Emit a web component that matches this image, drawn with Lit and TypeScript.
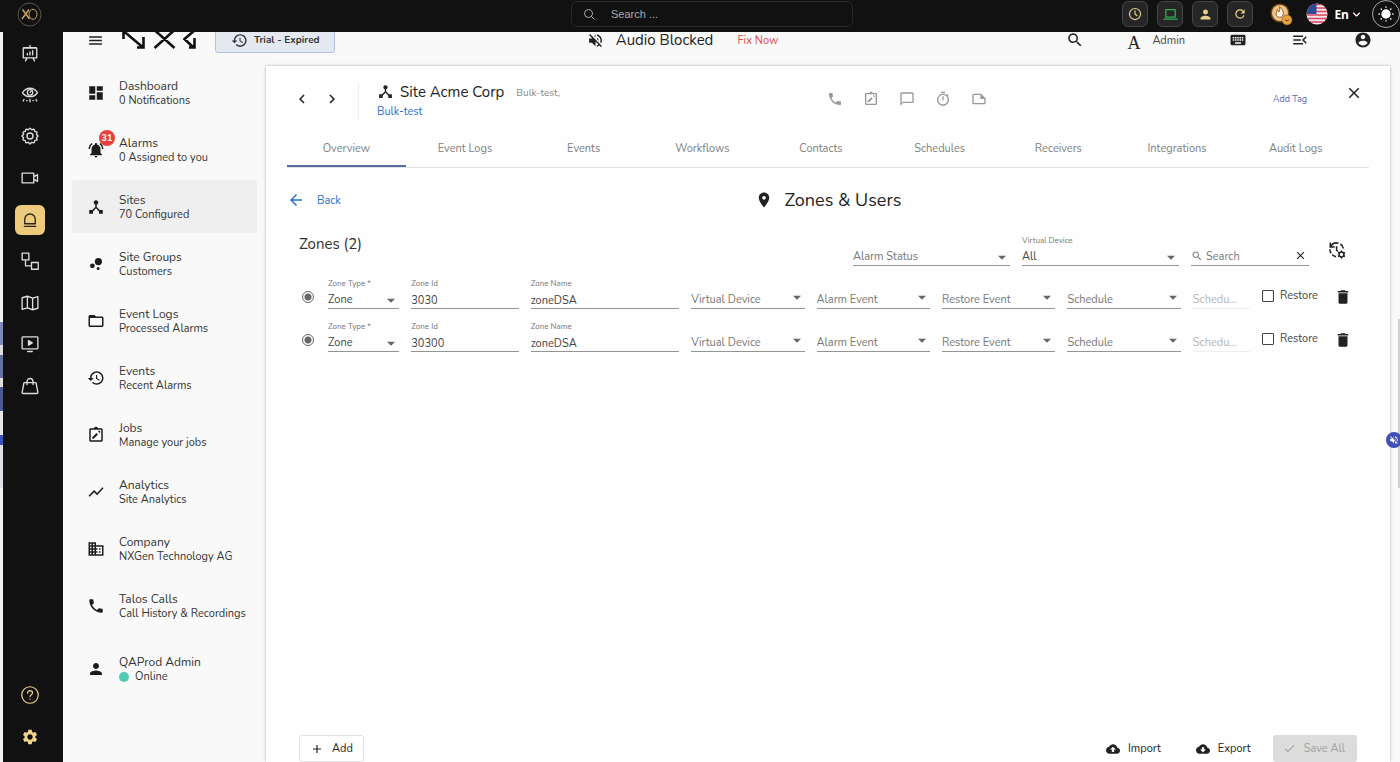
import { LitElement, html, css, svg, nothing, TemplateResult } from "lit";
import { customElement, state } from "lit/decorators.js";
import { classMap } from "lit/directives/class-map.js";

/* Filled glyphs on a 24-unit grid */
const glyphs: Record<string, string> = {
  menu: "M3 18h18v-2H3v2zm0-5h18v-2H3v2zm0-7v2h18V6H3z",
  dashboard: "M3 13h8V3H3v10zm0 8h8v-6H3v6zm10 0h8V11h-8v10zm0-18v6h8V3h-8z",
  bell: "M7.58 4.08L6.15 2.65C3.75 4.48 2.17 7.3 2.03 10.5h2c.15-2.65 1.51-4.97 3.55-6.42zm12.39 6.42h2c-.15-3.2-1.73-6.02-4.12-7.85l-1.42 1.43c2.02 1.45 3.39 3.77 3.54 6.42zM18 11c0-3.07-1.64-5.64-4.5-6.32V4c0-.83-.67-1.5-1.5-1.5s-1.5.67-1.5 1.5v.68C7.63 5.36 6 7.92 6 11v5l-2 2v1h16v-1l-2-2v-5zm-6 11c.14 0 .27-.01.4-.04.65-.14 1.18-.58 1.44-1.18.1-.24.15-.5.15-.78h-4c.01 1.1.9 2 2.01 2z",
  hub: "M17 16l-4-4V8.82C14.16 8.4 15 7.3 15 6c0-1.66-1.34-3-3-3S9 4.34 9 6c0 1.3.84 2.4 2 2.82V12l-4 4H3v5h5v-3.05l4-4.2 4 4.2V21h5v-5h-4z",
  bubbles: "M7.2 11.2a3.2 3.2 0 1 0 0 6.4 3.2 3.2 0 0 0 0-6.4zM14.8 16a2 2 0 1 0 0 4 2 2 0 0 0 0-4zM15.2 4a4.8 4.8 0 1 0 0 9.6 4.8 4.8 0 0 0 0-9.6z",
  folder: "M20 6h-8l-2-2H4c-1.100 0-1.990.900-1.990 2L2 18c0 1.100.900 2 2 2h16c1.100 0 2-.900 2-2V8c0-1.100-.900-2-2-2zm0 12H4V8h16v10z",
  history: "M13 3c-4.970 0-9 4.030-9 9H1l3.890 3.890.070.140L9 12H6c0-3.870 3.130-7 7-7s7 3.130 7 7-3.130 7-7 7c-1.930 0-3.680-.790-4.940-2.060l-1.420 1.420C8.270 19.990 10.510 21 13 21c4.970 0 9-4.030 9-9s-4.030-9-9-9zm-1 5v5l4.280 2.540.720-1.210-3.500-2.080V8H12z",
  job: "M19 3h-4.180C14.400 1.840 13.300 1 12 1s-2.400.840-2.820 2H5c-1.100 0-2 .900-2 2v14c0 1.100.900 2 2 2h14c1.100 0 2-.900 2-2V5c0-1.100-.900-2-2-2zm0 16H5V5h14v14zM7 15.100V17h1.900l5.700-5.700-1.900-1.900L7 15.100zm9.700-5.900-1.900-1.900 1-1c.200-.200.600-.200.800 0l1.100 1.100c.200.200.200.600 0 .800l-1 1z",
  trend: "M3.500 18.490l6-6.010 4 4L22 6.920l-1.410-1.410-7.090 7.970-4-4L2 16.990z",
  company: "M12 7V3H2v18h20V7H12zM6 19H4v-2h2v2zm0-4H4v-2h2v2zm0-4H4V9h2v2zm0-4H4V5h2v2zm4 12H8v-2h2v2zm0-4H8v-2h2v2zm0-4H8V9h2v2zm0-4H8V5h2v2zm10 12h-8v-2h2v-2h-2v-2h2v-2h-2V9h8v10zm-2-8h-2v2h2v-2zm0 4h-2v2h2v-2z",
  phone: "M6.620 10.790c1.440 2.830 3.760 5.140 6.590 6.590l2.200-2.200c.270-.270.670-.360 1.020-.240 1.120.370 2.330.570 3.570.570.550 0 1 .450 1 1V20c0 .550-.450 1-1 1-9.390 0-17-7.610-17-17 0-.550.450-1 1-1h3.500c.550 0 1 .450 1 1 0 1.250.200 2.450.570 3.570.110.350.030.740-.250 1.020l-2.200 2.200z",
  person: "M12 12c2.210 0 4-1.790 4-4s-1.790-4-4-4-4 1.790-4 4 1.790 4 4 4zm0 2c-2.670 0-8 1.340-8 4v2h16v-2c0-2.660-5.330-4-8-4z",
  search: "M15.500 14h-.790l-.280-.270C15.410 12.590 16 11.110 16 9.500 16 5.910 13.090 3 9.500 3S3 5.910 3 9.500 5.910 16 9.500 16c1.610 0 3.090-.590 4.230-1.570l.270.280v.790l5 4.990L20.490 19l-4.990-5zm-6 0C7.010 14 5 11.990 5 9.500S7.010 5 9.500 5 14 7.010 14 9.500 11.990 14 9.500 14z",
  keyboard: "M20 5H4c-1.100 0-1.990.900-1.990 2L2 17c0 1.100.900 2 2 2h16c1.100 0 2-.900 2-2V7c0-1.100-.900-2-2-2zm-9 3h2v2h-2V8zm0 3h2v2h-2v-2zM8 8h2v2H8V8zm0 3h2v2H8v-2zm-1 2H5v-2h2v2zm0-3H5V8h2v2zm9 7H8v-2h8v2zm0-4h-2v-2h2v2zm0-3h-2V8h2v2zm3 3h-2v-2h2v2zm0-3h-2V8h2v2z",
  menuOpen: "M3 18h13v-2H3v2zM3 13h10v-2H3v2zm0-7v2h13V6H3zm18 9.590L17.420 12 21 8.410 19.590 7l-5 5 5 5L21 15.590z",
  account: "M12 2C6.480 2 2 6.480 2 12s4.480 10 10 10 10-4.480 10-10S17.520 2 12 2zm0 3c1.660 0 3 1.340 3 3s-1.340 3-3 3-3-1.340-3-3 1.340-3 3-3zm0 14.200c-2.500 0-4.710-1.280-6-3.220.030-1.990 4-3.080 6-3.080 1.990 0 5.970 1.090 6 3.080-1.290 1.940-3.500 3.220-6 3.220z",
  muted: "M4.340 2.930L2.930 4.340 7.290 8.700 7 9H3v6h4l5 5v-6.590l4.180 4.180c-.650.490-1.380.880-2.180 1.110v2.060c1.340-.300 2.570-.920 3.610-1.750l2.050 2.050 1.410-1.410L4.340 2.930zM19 12c0 .820-.150 1.610-.410 2.340l1.530 1.530c.560-1.170.880-2.480.880-3.870 0-4.280-2.990-7.860-7-8.770v2.060c2.890.860 5 3.540 5 6.710zm-7-8l-1.880 1.880L12 7.760zm4.500 8c0-1.770-1.020-3.290-2.500-4.030v1.790l2.480 2.480c.010-.080.020-.160.020-.240z",
  left: "M15.410 7.410L14 6l-6 6 6 6 1.410-1.410L10.830 12z",
  right: "M10 6L8.590 7.410 13.170 12l-4.580 4.590L10 18l6-6z",
  chat: "M20 2H4c-1.100 0-2 .900-2 2v18l4-4h14c1.100 0 2-.900 2-2V4c0-1.100-.900-2-2-2zm0 14H6l-2 2V4h16v12z",
  timer: "M15 1H9v2h6V1zm-4 13h2V8h-2v6zm8.030-6.610l1.420-1.420c-.430-.510-.900-.990-1.410-1.410l-1.420 1.420C16.070 4.740 14.120 4 12 4c-4.970 0-9 4.030-9 9s4.020 9 9 9 9-4.030 9-9c0-2.120-.740-4.070-1.970-5.610zM12 20c-3.870 0-7-3.130-7-7s3.130-7 7-7 7 3.130 7 7-3.130 7-7 7z",
  note: "M15 4H4c-1.100 0-2 .900-2 2v12.010c0 1.090.900 1.990 2 1.990h16c1.100 0 2-.900 2-2v-7l-7-7zM4 18V6h10v6h6v6H4z",
  close: "M19 6.410L17.590 5 12 10.590 6.410 5 5 6.410 10.590 12 5 17.590 6.410 19 12 13.410 17.590 19 19 17.590 13.410 12z",
  back: "M20 11H7.830l5.590-5.590L12 4l-8 8 8 8 1.410-1.410L7.830 13H20v-2z",
  pin: "M12 2C8.130 2 5 5.130 5 9c0 5.250 7 13 7 13s7-7.750 7-13c0-3.870-3.130-7-7-7zm0 9.500c-1.380 0-2.500-1.120-2.500-2.500s1.120-2.500 2.500-2.500 2.500 1.120 2.500 2.500-1.120 2.500-2.500 2.500z",
  trash: "M6 19c0 1.100.900 2 2 2h8c1.100 0 2-.900 2-2V7H6v12zM19 4h-3.500l-1-1h-5l-1 1H5v2h14V4z",
  add: "M19 13h-6v6h-2v-6H5v-2h6V5h2v6h6v2z",
  check: "M9 16.170L4.830 12l-1.420 1.410L9 19 21 7l-1.410-1.410z",
  upload: "M19.350 10.040C18.670 6.590 15.640 4 12 4 9.110 4 6.600 5.640 5.350 8.040 2.340 8.360 0 10.910 0 14c0 3.310 2.690 6 6 6h13c2.760 0 5-2.240 5-5 0-2.640-2.050-4.780-4.650-4.960zM14 13v4h-4v-4H7l5-5 5 5h-3z",
  download: "M19.350 10.040C18.670 6.590 15.640 4 12 4 9.110 4 6.600 5.640 5.350 8.040 2.340 8.360 0 10.910 0 14c0 3.310 2.690 6 6 6h13c2.760 0 5-2.240 5-5 0-2.640-2.050-4.780-4.650-4.960zM17 13l-5 5-5-5h3V9h4v4h3z",
  caret: "M6 10l6 6 6-6z",
  gear: "M19.140 12.940c.040-.300.060-.610.060-.940 0-.320-.020-.640-.070-.940l2.030-1.580c.180-.140.230-.410.120-.610l-1.920-3.320c-.120-.220-.370-.290-.590-.220l-2.390.960c-.500-.380-1.030-.700-1.620-.940l-.360-2.540c-.040-.240-.240-.410-.480-.410h-3.840c-.240 0-.430.170-.470.410l-.360 2.540c-.590.240-1.130.570-1.620.940l-2.390-.960c-.220-.080-.470 0-.590.220L2.740 8.870c-.120.210-.080.470.120.610l2.030 1.580c-.050.300-.090.630-.090.940s.020.640.070.940l-2.030 1.580c-.180.140-.230.410-.120.610l1.920 3.320c.120.220.370.290.590.220l2.390-.960c.500.380 1.030.700 1.620.940l.360 2.540c.050.240.240.410.480.410h3.840c.240 0 .440-.170.470-.410l.360-2.540c.590-.240 1.130-.560 1.620-.940l2.390.960c.220.080.470 0 .590-.220l1.920-3.320c.120-.220.070-.470-.120-.610l-2.010-1.580zM12 15.600c-1.980 0-3.600-1.620-3.600-3.600s1.620-3.600 3.600-3.600 3.600 1.620 3.600 3.600-1.620 3.600-3.600 3.600z",
  refresh: "M17.650 6.350C16.200 4.900 14.210 4 12 4c-4.420 0-7.990 3.580-7.990 8s3.570 8 7.990 8c3.730 0 6.840-2.550 7.730-6h-2.080c-.820 2.330-3.040 4-5.650 4-3.310 0-6-2.690-6-6s2.690-6 6-6c1.660 0 3.140.690 4.220 1.780L13 11h7V4l-2.350 2.350z",
};

const icon = (name: string, size = 18) =>
  html`<svg class="icon" width=${size} height=${size} viewBox="0 0 24 24" fill="currentColor" aria-hidden="true"><path d=${glyphs[name]}></path></svg>`;

/* Outlined glyphs on a 24-unit grid */
const line = (body: TemplateResult<2>, size = 20, width = 1.8) =>
  html`<svg class="icon" width=${size} height=${size} viewBox="0 0 24 24" fill="none" stroke="currentColor" stroke-width=${width} stroke-linecap="round" stroke-linejoin="round" aria-hidden="true">${body}</svg>`;

const railIcons: { label: string; body: TemplateResult<2> }[] = [
  { label: "Presentation", body: svg`<path d="M12 2v3M3.500 5h17M3 5.500v13h18v-13zM8 18.500l-2 4M16 18.500l2 4M8.500 14.500v-2M12 14.500v-4M15.500 14.500V9"></path>` },
  { label: "Monitoring", body: svg`<path d="M2 9c5-8 15-8 20 0-5 7-15 7-20 0z"></path><circle cx="12" cy="8.500" r="3.600"></circle><path d="M12 8.500l1.500-1.500M4 18l-1 2M12 17.500v3.500M20 18l1 2M8 19.500h-.5M16 19.500h.5"></path>` },
  { label: "Settings", body: svg`<path d="M12 1.500l2.300 2.200 3.100-.8 1 3 3 1-.8 3.100 2.200 2-2.200 2.200.8 3-3 1-1 3-3.100-.8-2.300 2.200-2.300-2.200-3.100.8-1-3-3-1 .8-3-2.200-2.200 2.200-2-.8-3.100 3-1 1-3 3.100.8z"></path><circle cx="12" cy="12" r="4"></circle>` },
  { label: "Cameras", body: svg`<path d="M1.500 5.500h15.500v13H1.500zM17 10.500l5-3v9l-5-3"></path>` },
  { label: "Alarms", body: svg`<path d="M5 17v-6a7 7 0 0 1 14 0v6zM4.500 20.500h15"></path>` },
  { label: "Workflows", body: svg`<path d="M1.500 1.500h9v9h-9zM14 14h9v9h-9zM6 10.500V18.500H14"></path>` },
  { label: "Maps", body: svg`<path d="M1.500 5l7-2 7 2.500 7-2V19l-7 2-7-2.500-7 2zM8.500 3v15.500M15.500 5.500V21"></path>` },
  { label: "Playback", body: svg`<rect x="1.500" y="2.500" width="21" height="16" rx="1"></rect><path d="M10 7.500v6l5-3z" fill="currentColor"></path><path d="M9 22h6"></path>` },
  { label: "Store", body: svg`<path d="M4 7.500h16l2.500 13c0 1-.5 1.500-1.500 1.500H3c-1 0-1.500-.5-1.500-1.500zM8 10V6a4 4 0 0 1 8 0v4"></path>` },
];

const menu = [
  { title: "Dashboard", sub: "0 Notifications", icon: "dashboard" },
  { title: "Alarms", sub: "0 Assigned to you", icon: "bell", badge: 31 },
  { title: "Sites", sub: "70 Configured", icon: "hub" },
  { title: "Site Groups", sub: "Customers", icon: "bubbles" },
  { title: "Event Logs", sub: "Processed Alarms", icon: "folder" },
  { title: "Events", sub: "Recent Alarms", icon: "history" },
  { title: "Jobs", sub: "Manage your jobs", icon: "job" },
  { title: "Analytics", sub: "Site Analytics", icon: "trend" },
  { title: "Company", sub: "NXGen Technology AG", icon: "company" },
  { title: "Talos Calls", sub: "Call History & Recordings", icon: "phone" },
];

const tabs = ["Overview", "Event Logs", "Events", "Workflows", "Contacts", "Schedules", "Receivers", "Integrations", "Audit Logs"];

const zones = [
  { type: "Zone", id: "3030", name: "zoneDSA" },
  { type: "Zone", id: "30300", name: "zoneDSA" },
];

const reset = css`
  * { box-sizing: border-box; }
  button, input, select { font: inherit; color: inherit; background: none; border: 0; margin: 0; padding: 0; }
  button { cursor: pointer; }
  a { text-decoration: none; color: inherit; }
  .icon { display: block; flex: none; }
`;

const fieldStyles = css`
  .field { display: flex; flex-direction: column; min-width: 0; position: relative; border-bottom: 1px solid #949494; color: #444; }
  .field label, .field .spacer { height: 12px; font-size: 8px; line-height: 12px; color: #777; white-space: nowrap; }
  .field .control { height: 18px; width: 100%; padding-top: 2px; font-size: 11px; line-height: 16px; outline: none; appearance: none; text-overflow: ellipsis; }
  .field.empty .control { color: #777; opacity: 1; }
  .field.disabled { border-bottom-color: #eee; }
  .field.disabled .control { color: #b5b5b5; }
  .field .arrow { position: absolute; right: 0; bottom: 0; color: #666; pointer-events: none; }
  .field.raised .arrow { bottom: 3px; }
`;

const selectField = (id: string, label: string, value = "", raised = false) => html`
  <div class=${classMap({ field: true, empty: !value, raised })}>
    ${value ? html`<label for=${id}>${label}</label>` : html`<span class="spacer"></span>`}
    <select class="control" id=${id} aria-label=${label}><option>${value || label}</option></select>
    <span class="arrow">${icon("caret", 16)}</span>
  </div>`;

@customElement("zone-row")
class ZoneRow extends LitElement {
  static properties = { zone: { attribute: false }, index: { type: Number } };
  declare zone: { type: string; id: string; name: string };
  declare index: number;

  static styles = [reset, fieldStyles, css`
    :host { display: block; }
    .row {
      display: grid;
      grid-template-columns: 17px 71fr 107fr 148fr 113fr 113fr 113fr 113fr 57fr 54px 29px;
      column-gap: 12px; height: 43px; align-items: start;
    }
    .radio { appearance: none; width: 12px; height: 12px; border: 1px solid #666; border-radius: 50%; background: radial-gradient(circle, #666 0 3px, transparent 4px); margin: 13px 3px; }
    .restore { display: flex; align-items: center; gap: 6px; font-size: 11px; line-height: 14px; color: #444; padding-top: 11px; }
    .box { appearance: none; width: 12px; height: 12px; border: 1px solid #444; border-radius: 1px; flex: none; }
    .delete { justify-self: center; color: #222; padding-top: 10px; }
  `];

  render() {
    const { zone, index: i } = this;
    return html`
      <div class="row">
        <input class="radio" type="radio" checked aria-label="Select zone ${zone.id}" />
        ${selectField(`type-${i}`, "Zone Type *", zone.type)}
        <div class="field"><label for="id-${i}">Zone Id</label><input class="control" id="id-${i}" .value=${zone.id} /></div>
        <div class="field"><label for="name-${i}">Zone Name</label><input class="control" id="name-${i}" .value=${zone.name} /></div>
        ${["Virtual Device", "Alarm Event", "Restore Event", "Schedule"].map((l, n) => selectField(`s${n}-${i}`, l, "", true))}
        <div class="field empty disabled">
          <span class="spacer"></span>
          <select class="control" disabled aria-label="Schedule type"><option>Schedu...</option></select>
        </div>
        <label class="restore"><input class="box" type="checkbox" />Restore</label>
        <button class="delete" aria-label="Delete zone">${icon("trash", 18)}</button>
      </div>`;
  }
}

@customElement("app-root")
class AppRoot extends LitElement {
  @state() private tab = "Overview";
  @state() private page = "Sites";

  static styles = [reset, fieldStyles, css`
    :host { display: block; font-family: "Nunito", "Lato", sans-serif; font-size: 11px; color: #333; background: #f9f9f9; overflow: hidden; }
    .shell { display: grid; grid-template-columns: 3px 60px minmax(0, 1fr); grid-template-rows: 32px 1fr; min-height: 100vh; position: relative; }

    .edge { grid-row: 2; background: linear-gradient(#f4f4f6 290px, #7d87b8 290px 313px, #ddd 313px 323px, #66709f 323px 346px, #ddd 346px 355px, #4c588f 355px 379px, #e6e6ea 379px 403px, #3f51b5 403px 413px, #e0e0e6 413px 456px, #f4f4f6 456px); }
    .topbar { grid-column: 1 / -1; display: grid; grid-template-columns: 563fr 282px 539fr; background: #111; position: relative; z-index: 1; padding: 0 0 4px; align-items: center; column-gap: 8px; }
    .brand { display: flex; padding-left: 17px; }
    .find { display: flex; align-items: center; gap: 16px; height: 26px; padding: 0 11px; border: 1px solid #292929; border-radius: 6px; color: #aaa; font-family: "Liberation Sans", sans-serif; }
    .find input { flex: 1; min-width: 0; outline: none; }
    .find input::placeholder, .search input::placeholder { color: inherit; opacity: 1; }
    .tools { display: flex; justify-content: flex-end; align-items: center; gap: 9px; }
    .tool { width: 26px; height: 26px; display: grid; place-items: center; border: 1px solid #454545; border-radius: 6px; background: #262626; color: #e8cf8a; }
    .tool.green { color: #2fae55; }
    .coin { margin: 0 4px 0 8px; }
    .lang { display: flex; align-items: center; gap: 3px; color: #fff; font: bold 12px "Open Sans", sans-serif; margin: 0 2px 0 -3px; }
    .theme { width: 28px; height: 28px; border: 1px solid #aaa; border-radius: 50%; color: #fff; display: grid; place-items: center; }

    .rail { grid-row: 2; background: #111; color: #ddd; display: flex; flex-direction: column; align-items: center; justify-content: space-between; padding: 6px 7px 10px 0; }
    .rail-list { display: flex; flex-direction: column; justify-content: space-between; min-height: 363px; }
    .rail-list.low { min-height: 72px; color: #f0d48a; }
    .rail button { width: 30px; height: 30px; display: grid; place-items: center; border-radius: 6px; }
    .rail .on { background: #edcb7c; color: #2b2414; }

    .app { grid-row: 2; display: flex; flex-direction: column; min-width: 0; }
    .header { height: 52px; margin-top: -18px; display: flex; align-items: center; padding: 0 28px 0 24px; color: #222; }
    .logo { margin: 0 18px 0 16px; }
    .trial { height: 26px; display: flex; align-items: center; gap: 6px; padding: 0 14px 0 15px; border: 1px solid #b3c0dd; border-radius: 3px; background: #e4e8f0; font-size: 10px; font-weight: bold; color: #333; }
    .audio { flex: 1; display: flex; align-items: center; justify-content: center; gap: 12px; font-size: 15px; padding-right: 36px; }
    .audio a { font-size: 11px; color: #e04a4a; margin-left: 12px; }
    .actions { display: flex; align-items: center; }
    .user { display: flex; align-items: center; gap: 12px; margin: 0 44px 0 43px; color: #444; }
    .serif { font: 18px "Liberation Serif", serif; color: #222; padding-top: 7px; }
    .actions .open { margin: 0 45px 0 44px; }

    .body { flex: 1; display: grid; grid-template-columns: 203px minmax(0, 1fr); }
    .side { display: flex; flex-direction: column; gap: 4px; padding: 0 9px; }
    .item { display: grid; grid-template-columns: 18px 1fr; column-gap: 14px; align-items: center; height: 53px; padding: 0 0 0 15px; border-radius: 3px; white-space: nowrap; position: relative; }
    .item .icon { color: #1c1c1c; }
    .item.on { background: #efefef; }
    .item.me { margin-top: 6px; }
    .name { font-size: 12px; line-height: 15px; padding-top: 1px; }
    .sub { font-size: 11px; line-height: 14px; display: flex; align-items: center; gap: 6px; }
    .dot { width: 10px; height: 10px; border-radius: 50%; background: #50c9b5; }
    .badge { position: absolute; left: 27px; top: 7px; min-width: 16px; height: 16px; border-radius: 8px; background: #e8413c; color: #fff; font-size: 9px; line-height: 16px; font-weight: bold; text-align: center; }

    .card { background: #fefefe; margin-right: 10px; padding: 0 21px; box-shadow: 0 0 3px rgba(0, 0, 0, 0.3); display: flex; flex-direction: column; }
    .site { display: flex; align-items: center; height: 65px; }
    .step { display: flex; gap: 12px; padding: 0 17px 0 6px; color: #222; }
    .who { position: relative; border-left: 1px solid #eee; padding-left: 18px; flex: 1; display: grid; grid-template-columns: auto 1fr; align-items: center; column-gap: 12px; row-gap: 2px; margin-top: 3px; }
    .who h1 { margin: 0; font-size: 15px; line-height: 20px; font-weight: normal; display: flex; align-items: center; gap: 6px; color: #222; }
    .grey { font-size: 10px; color: #888; padding-top: 3px; }
    .blue { color: #2b74c9; }
    .quick { display: flex; gap: 20px; color: #999; }
    .tag { font-size: 9px; color: #5c6bb5; margin: 0 38px 0 286px; }
    .x { color: #222; padding-right: 6px; margin-top: -11px; }
    .tabs { display: flex; border-bottom: 1px solid #e2e2e2; padding-right: 14px; }
    .tab { flex: 1 1 0; height: 36px; border-bottom: 2px solid transparent; color: #808080; }
    .tab.on { border-bottom-color: #5b6aa5; }
    .crumb { display: grid; grid-template-columns: 1fr auto 1fr; align-items: center; height: 64px; margin-bottom: 2px; }
    .back { display: flex; align-items: center; gap: 12px; color: #2b74c9; }
    .crumb h2 { margin: 0; font-size: 18px; font-weight: normal; display: flex; align-items: center; gap: 12px; color: #222; }
    .content { padding: 0 12px; flex: 1; display: flex; flex-direction: column; }
    .filters { display: grid; grid-template-columns: 1fr 157px 157px 118px 32px; column-gap: 12px; padding-right: 4px; align-items: end; height: 32px; margin-bottom: 12px; }
    .filters h3 { margin: 0; align-self: start; font-size: 15px; line-height: 20px; font-weight: normal; }
    .search { flex-direction: row; align-items: center; gap: 3px; height: 20px; color: #777; }
    .search button { color: #222; padding-right: 2px; }
    .sync { justify-self: center; align-self: center; color: #222; }
    .foot { margin-top: auto; display: flex; align-items: flex-end; }
    .btn { height: 27px; display: flex; align-items: center; gap: 8px; color: #222; }
    .btn.add { padding: 0 10px; border: 1px solid #e2e2e2; border-radius: 3px; background: #fff; margin-right: auto; }
    .btn.export { margin: 0 22px 0 35px; }
    .btn.save { padding: 0 12px 0 10px; border-radius: 3px; background: #dcdcdc; color: #a3a3a3; }
    .scroll { position: absolute; right: 0; top: 319px; width: 2px; height: 169px; background: #d2d2d2; }
    .bubble { position: absolute; right: -2px; top: 432px; width: 16px; height: 16px; border-radius: 50%; background: #3f51b5; color: #fff; display: grid; place-items: center; }
  `];

  private topbar() {
    return html`
      <header class="topbar">
        <a class="brand" href="#" aria-label="XO home">
          <svg width="25" height="25" viewBox="0 0 25 25" fill="none" stroke="#c8a968">
            <circle cx="12.500" cy="12.500" r="11.500" stroke="#5c5647"></circle>
            <path d="M5.500 7.500l7 9.500M12 7.500L5 17" stroke-width="1.400"></path>
            <ellipse cx="16" cy="12.300" rx="4" ry="5"></ellipse>
          </svg>
        </a>
        <label class="find">
          ${line(svg`<circle cx="11" cy="11" r="8"></circle><path d="M17 17l5 5"></path>`, 12, 2)}
          <input type="search" placeholder="Search ..." aria-label="Search" />
        </label>
        <div class="tools">
          <button class="tool" aria-label="Clock">${line(svg`<circle cx="12" cy="12" r="9.500"></circle><path d="M12 6.500V12l3.500 3"></path>`, 14, 2)}</button>
          <button class="tool green" aria-label="Device">${line(svg`<path d="M4.500 4h15v12h-15zM1.500 19.500h21"></path>`, 15, 2)}</button>
          <button class="tool" aria-label="User">${icon("person", 15)}</button>
          <button class="tool" aria-label="Refresh">${icon("refresh", 14)}</button>
          <svg class="coin icon" width="23" height="23" viewBox="0 0 23 23">
            <circle cx="10" cy="10" r="9.500" fill="#6b4515"></circle>
            <circle cx="10" cy="10" r="8" fill="#efc384"></circle>
            <path d="M9.500 3.500c3 3 4.500 5.500 3.500 8.500-1 3-5 3-6.500.5C5.500 10.500 7 8 7.500 6.500c.5 1.500 1 2 1.500 2.500.8-1.500 1-3.500.5-5.500z" fill="#fff3dc" stroke="#6c4a26" stroke-width=".8"></path>
            <circle cx="17" cy="17" r="5" fill="#e5a23f" stroke="#8a5c1c" stroke-width=".6"></circle>
            <path d="M15 16.500l2 1.500 2-1.500" fill="none" stroke="#6c4312"></path>
          </svg>
          <svg class="icon" width="22" height="22" viewBox="0 0 22 22" role="img" aria-label="United States">
            <clipPath id="round"><circle cx="11" cy="11" r="10.500"></circle></clipPath>
            <g clip-path="url(#round)">
              <rect width="22" height="22" fill="#f3e6ea"></rect>
              <path d="M0 1.500h22M0 5h22M0 8.500h22M0 12h22M0 15.500h22M0 19h22" stroke="#d8435c" stroke-width="1.700"></path>
              <rect width="10.500" height="11" fill="#2f4a94"></rect>
            </g>
          </svg>
          <button class="lang">En ${line(svg`<path d="M4 8l8 8 8-8"></path>`, 9, 3)}</button>
          <button class="theme" aria-label="Theme">
            ${line(svg`<circle cx="12" cy="12" r="6" fill="currentColor"></circle><path d="M12 1.500v.5M12 22v.5M1.500 12h.5M22 12h.5M4.600 4.600l.4.400M19 19l.4.400M4.600 19.400l.4-.4M19 5l.4-.4"></path>`, 16, 2)}
          </button>
        </div>
      </header>`;
  }

  private header() {
    return html`
      <div class="header">
        <button aria-label="Menu">${icon("menu", 17)}</button>
        <svg class="logo icon" width="77" height="28" viewBox="0 0 77 28" fill="none" stroke="#111" stroke-width="2.600" aria-label="NXG">
          <path d="M3.500 13V5l19 16M23.500 11v10.500H17M34.500 4l20 18M54.500 4l-20 18M75 4l-10.500 9 9 8.500M74.500 12v9.500H69"></path>
        </svg>
        <button class="trial">${icon("history", 17)}Trial - Expired</button>
        <div class="audio">${icon("muted", 17)}<span>Audio Blocked</span><a href="#">Fix Now</a></div>
        <div class="actions">
          <button aria-label="Search">${icon("search", 18)}</button>
          <div class="user"><span class="serif">A</span><span>Admin</span></div>
          <button aria-label="Keyboard">${icon("keyboard", 18)}</button>
          <button class="open" aria-label="Collapse">${icon("menuOpen", 18)}</button>
          <button aria-label="Account">${icon("account", 18)}</button>
        </div>
      </div>`;
  }

  private side() {
    return html`
      <nav class="side">
        ${menu.map((m) => html`
          <a href="#" class=${classMap({ item: true, on: this.page === m.title })} @click=${() => (this.page = m.title)}>
            ${icon(m.icon, 18)}
            ${m.badge ? html`<span class="badge">${m.badge}</span>` : nothing}
            <div><div class="name">${m.title}</div><div class="sub">${m.sub}</div></div>
          </a>`)}
        <a href="#" class="item me">
          ${icon("person", 18)}
          <div><div class="name">QAProd Admin</div><div class="sub"><span class="dot"></span>Online</div></div>
        </a>
      </nav>`;
  }

  private card() {
    return html`
      <main class="card">
        <div class="site">
          <div class="step">
            <button aria-label="Previous">${icon("left", 18)}</button>
            <button aria-label="Next">${icon("right", 18)}</button>
          </div>
          <div class="who">
            <h1>${icon("hub", 17)}Site Acme Corp</h1><span class="grey">Bulk-test,</span>
            <a class="blue" href="#">Bulk-test</a>
          </div>
          <div class="quick">
            ${["phone", "job", "chat", "timer", "note"].map((n) => html`<button aria-label=${n}>${icon(n, 16)}</button>`)}
          </div>
          <a class="tag" href="#">Add Tag</a>
          <button class="x" aria-label="Close">${icon("close", 18)}</button>
        </div>
        <div class="tabs" role="tablist">
          ${tabs.map((t) => html`<button role="tab" class=${classMap({ tab: true, on: this.tab === t })} @click=${() => (this.tab = t)}>${t}</button>`)}
        </div>
        <div class="crumb">
          <button class="back">${icon("back", 18)}Back</button>
          <h2>${icon("pin", 18)}Zones &amp; Users</h2>
        </div>
        <div class="content">
          <div class="filters">
            <h3>Zones (2)</h3>
            ${selectField("status", "Alarm Status")}
            ${selectField("device", "Virtual Device", "All")}
            <div class="field search">
              ${icon("search", 12)}
              <input class="control" type="text" placeholder="Search" aria-label="Search zones" />
              <button aria-label="Clear">${icon("close", 13)}</button>
            </div>
            <button class="sync" aria-label="History settings">
              <svg class="icon" width="18" height="18" viewBox="0 0 24 24" fill="none" stroke="currentColor" stroke-width="2">
                <path d="M3 2v6h6M3.500 7.500C6 3 10 1.800 14 3M16.500 4c2 1.300 3.500 3.300 4 6M2.500 11c0 2 .6 3.800 1.600 5.300M5.500 18c1.500 1.600 3.200 2.500 5.200 2.900M11.500 7v5.500l2 1.500"></path>
                <circle cx="18" cy="18" r="3.200"></circle>
                <path d="M18 12.700v2M18 21.300v2M13.400 15.300l1.800 1M20.800 19.700l1.800 1M13.400 20.700l1.800-1M20.800 16.300l1.800-1"></path>
              </svg>
            </button>
          </div>
          ${zones.map((z, i) => html`<zone-row .zone=${z} .index=${i}></zone-row>`)}
          <div class="foot">
            <button class="btn add">${icon("add", 14)}Add</button>
            <button class="btn">${icon("upload", 14)}Import</button>
            <button class="btn export">${icon("download", 14)}Export</button>
            <button class="btn save" disabled>${icon("check", 13)}Save All</button>
          </div>
        </div>
      </main>`;
  }

  render() {
    return html`
      <div class="shell">
        ${this.topbar()}
        <div class="edge"></div>
        <nav class="rail">
          <div class="rail-list">
            ${railIcons.map((r) => html`<button class=${classMap({ on: r.label === "Alarms" })} aria-label=${r.label}>${line(r.body, 18)}</button>`)}
          </div>
          <div class="rail-list low">
            <button aria-label="Help">${line(svg`<circle cx="12" cy="12" r="11"></circle><path d="M8.800 9.500c0-4.500 6.500-4 6.500-.3 0 2.500-3.300 2.500-3.300 5M12 17.500v.2"></path>`, 18, 1.600)}</button>
            <button aria-label="Preferences">${icon("gear", 18)}</button>
          </div>
        </nav>
        <div class="app">
          ${this.header()}
          <div class="body">${this.side()}${this.card()}</div>
        </div>
        <div class="scroll"></div>
        <div class="bubble">${icon("muted", 10)}</div>
      </div>`;
  }
}
